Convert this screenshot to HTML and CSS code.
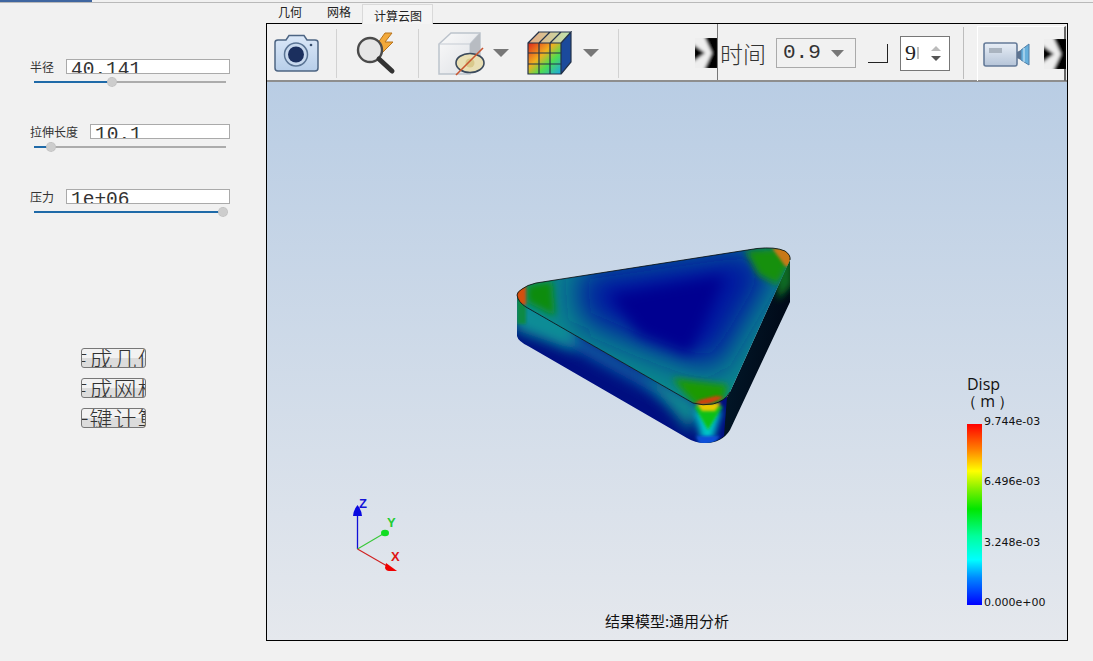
FILE: index.html
```html
<!DOCTYPE html>
<html lang="zh">
<head>
<meta charset="utf-8">
<title>计算云图</title>
<link rel="stylesheet" href="styles.css">
</head>
<body>
<svg width="0" height="0" class="defs">
  <defs>
    <symbol id="chev" viewBox="0 0 22 30">
      <g filter="url(#b1)">
        <path d="M-2 -2H24V32H-2Z" fill="#eee"/>
        <path d="M-2 6L10 15L-2 24Z" fill="#000"/>
        <path d="M9 -2H24V15L17 15Z" fill="#000"/>
        <path d="M9 32H24V15L17 15Z" fill="#000"/>
      </g>
    </symbol>
    <filter id="b1" x="-10%" y="-10%" width="120%" height="120%"><feGaussianBlur stdDeviation="1.4"/></filter>
    <filter id="b20" filterUnits="userSpaceOnUse" x="480" y="200" width="350" height="280"><feGaussianBlur stdDeviation="17"/></filter>
    <filter id="b10" filterUnits="userSpaceOnUse" x="480" y="200" width="350" height="280"><feGaussianBlur stdDeviation="7"/></filter>
    <filter id="b4" filterUnits="userSpaceOnUse" x="480" y="200" width="350" height="280"><feGaussianBlur stdDeviation="3.500"/></filter>
    <filter id="b2" filterUnits="userSpaceOnUse" x="480" y="200" width="350" height="280"><feGaussianBlur stdDeviation="1.400"/></filter>
  </defs>
</svg>
<div class="topline"><div class="topline-active"></div></div>
<div class="app">
  <aside class="side">
    <div class="param">
      <div class="param-head"><span class="param-label">半径</span><div class="field"><span>40.141</span></div></div>
      <div class="slider"><div class="slider-fill" style="width:78px"></div><div class="slider-thumb" style="left:78px"></div></div>
    </div>
    <div class="param">
      <div class="param-head"><span class="param-label">拉伸长度</span><div class="field"><span>10.1</span></div></div>
      <div class="slider"><div class="slider-fill" style="width:17px"></div><div class="slider-thumb" style="left:17px"></div></div>
    </div>
    <div class="param">
      <div class="param-head"><span class="param-label">压力</span><div class="field"><span>1e+06</span></div></div>
      <div class="slider"><div class="slider-fill" style="width:189px"></div><div class="slider-thumb" style="left:189px"></div></div>
    </div>
    <div class="actions">
      <button class="action">生成几何</button>
      <button class="action">生成网格</button>
      <button class="action">一键计算</button>
    </div>
  </aside>
  <main class="main">
    <nav class="tabs">
      <span class="tab">几何</span>
      <span class="tab">网格</span>
      <span class="tab tab-on">计算云图</span>
    </nav>
    <section class="viewer">
      <div class="toolbar">
        <svg class="ic ic-camera" width="47" height="40" viewBox="0 0 47 40">
          <defs><linearGradient id="cam" x1="0" y1="0" x2="0" y2="1"><stop offset="0" stop-color="#dbe8f8"/><stop offset="1" stop-color="#b7cee9"/></linearGradient></defs>
          <path d="M2 9.500Q2 7 5 7H13L16 2.500H31L34 7H42Q45 7 45 9.500V35Q45 38 42 38H5Q2 38 2 35Z" fill="url(#cam)" stroke="#4d6583" stroke-width="1.500"/>
          <circle cx="23" cy="21.500" r="11.500" fill="#c8d9ee" stroke="#5a7494" stroke-width="1.500"/>
          <circle cx="23" cy="21.500" r="8" fill="#1b2f5e"/>
          <circle cx="38" cy="12" r="1.300" fill="#38506f"/>
        </svg>
        <i class="sep sep-a"></i>
        <svg class="ic ic-search" width="47" height="44" viewBox="0 0 47 44">
          <path d="M30 2L20 16H27L23 26L38 11H30L37 2Z" fill="#f2a93a" stroke="#b8741d" stroke-width="1"/>
          <circle cx="15" cy="19" r="12" fill="#e6e6e6" stroke="#4b4b4b" stroke-width="2.400"/>
          <path d="M24 28L37 40" stroke="#333" stroke-width="5" stroke-linecap="round"/>
        </svg>
        <i class="sep sep-b"></i>
        <svg class="ic ic-box" width="48" height="46" viewBox="0 0 48 46">
          <defs><linearGradient id="bx" x1="0" y1="0" x2="1" y2="1"><stop offset="0" stop-color="#fafafa"/><stop offset="1" stop-color="#dcdfe4"/></linearGradient></defs>
          <path d="M2 14L14 3H43V32L33 44H2Z" fill="url(#bx)" stroke="#bcc3cc" stroke-width="1.500"/>
          <path d="M2 14H33V44M33 14L43 3" fill="none" stroke="#c6ccd4" stroke-width="1.200"/>
          <path d="M33 14L43 3V32L33 44Z" fill="#b8bcc2"/>
          <ellipse cx="33" cy="33" rx="14" ry="9.500" fill="#e9dfb4" stroke="#3b4a5c" stroke-width="1.600"/>
          <circle cx="33" cy="33" r="4.500" fill="#d9c98b"/>
          <path d="M19 45L46 18" stroke="#c9552f" stroke-width="1.600"/>
        </svg>
        <svg class="ic ic-caret" width="16" height="8" viewBox="0 0 16 8"><path d="M0 0H16L8 8Z" fill="#777"/></svg>
        <svg class="ic ic-grid" width="45" height="44" viewBox="0 0 45 44">
          <defs>
            <linearGradient id="gf" x1="0" y1="0" x2="1" y2="1"><stop offset="0" stop-color="#e0261c"/><stop offset=".4" stop-color="#f0b020"/><stop offset=".65" stop-color="#50dc50"/><stop offset="1" stop-color="#18a8e8"/></linearGradient>
            <linearGradient id="gt" x1="0" y1="0" x2="1" y2="0"><stop offset="0" stop-color="#e8a880"/><stop offset="1" stop-color="#bfe6ae"/></linearGradient>
          </defs>
          <path d="M1 12L11 1H44L34 12Z" fill="url(#gt)"/>
          <path d="M34 12L44 1V31L34 43Z" fill="#1b4a9c"/>
          <rect x="1" y="12" width="33" height="31" fill="url(#gf)"/>
          <path d="M1 12H34V43H1ZM12 12V43M23 12V43M1 22H34M1 33H34M12 1L1 12M23 1L12 12M34 1L23 12M11 1H44L34 12M34 12L44 1V31L34 43" fill="none" stroke="#23324a" stroke-width="1.200"/>
        </svg>
        <svg class="ic ic-caret2" width="16" height="8" viewBox="0 0 16 8"><path d="M0 0H16L8 8Z" fill="#777"/></svg>
        <i class="sep sep-c"></i>
        <svg class="ic ic-chev" width="22" height="30"><use href="#chev"/></svg>
        <i class="sep sep-d"></i>
        <span class="time-label">时间</span>
        <div class="combo"><span>0.9</span><svg width="13" height="7" viewBox="0 0 13 7"><path d="M0 0H13L6.500 7Z" fill="#777"/></svg></div>
        <div class="corner"></div>
        <div class="spin"><span class="spin-val">9</span><i class="spin-cut"></i><div class="spin-btns"><svg width="10" height="5" viewBox="0 0 10 5"><path d="M5 0L10 5H0Z" fill="#bbb"/></svg><svg width="10" height="5" viewBox="0 0 10 5"><path d="M0 0H10L5 5Z" fill="#555"/></svg></div></div>
        <i class="sep sep-e"></i>
        <div class="video">
          <svg width="47" height="26" viewBox="0 0 47 26">
            <defs><linearGradient id="vd" x1="0" y1="0" x2="0" y2="1"><stop offset="0" stop-color="#e8eef6"/><stop offset="1" stop-color="#b5c4d8"/></linearGradient></defs>
            <rect x="1" y="2" width="33" height="23" rx="2" fill="url(#vd)" stroke="#647a98" stroke-width="1.600"/>
            <rect x="6" y="7" width="13" height="5" fill="#aab4c0"/>
            <path d="M34 11L38 9V19L34 17Z" fill="#5d7390"/>
            <path d="M38 9L46 3V24L38 19Z" fill="#68b0dc" stroke="#4f7fa8"/>
            <path d="M41 7V21" stroke="#d8ecf8"/>
          </svg>
          <svg class="video-chev" width="22" height="30"><use href="#chev"/></svg>
        </div>
      </div>
      <div class="scene">
        <svg class="model" width="290" height="210" viewBox="510 240 290 210">
          <defs>
            <clipPath id="topc"><path d="M517 295Q517 292 522 289Q527 285 536 283L757 248.500Q775 246.500 785 251Q791 255 790 260L730 392Q725 401 713 404Q703 406 693 403L526 307Q518 302 517 295Z"/></clipPath>
            <clipPath id="frontc"><path d="M517 295Q518 302 526 307L693 403Q703 406 713 404Q722 402 727 397L724 436Q716 443 705 443Q695 443 687 438L528 346Q518 341 517 336Z"/></clipPath>
            <clipPath id="rightc"><path d="M727 397L730 392L790 260V302L730 430Q722 443 705 443L713 404Z"/></clipPath>
            <linearGradient id="rightg" x1="0" y1="0" x2="1" y2=".38"><stop offset="0" stop-color="#075a58"/><stop offset=".3" stop-color="#021c2e"/><stop offset="1" stop-color="#000614"/></linearGradient>
          </defs>
          <g clip-path="url(#rightc)">
            <rect x="700" y="250" width="95" height="195" fill="url(#rightg)"/>
            <path d="M775 265L792 255V285L778 300Z" fill="#0a6a20" filter="url(#b4)"/>
          </g>
          <g clip-path="url(#frontc)">
            <path d="M510 280H740V450H510Z" fill="#000e80"/>
            <path d="M510 296L700 405V418L510 314Z" fill="#0a62a4" filter="url(#b10)"/>
            <path d="M515 290L575 322V350L515 330Z" fill="#0b8d96" filter="url(#b10)"/>
            <path d="M517 297H526V324H517Z" fill="#0f8a44" filter="url(#b2)"/>
            <path d="M640 370L700 405L690 432Z" fill="#0b8a90" filter="url(#b10)"/>
            <path d="M694 410H722L712 442H702Z" fill="#00c8c8" filter="url(#b4)"/>
            <path d="M694 406H723L708 430Z" fill="#10c014" filter="url(#b2)"/>
            <path d="M696 403H721L715 411H702Z" fill="#e8c800" filter="url(#b2)"/>
            <path d="M696 436H720L712 445H700Z" fill="#0c50d8" filter="url(#b2)"/>
          </g>
          <g clip-path="url(#topc)">
            <rect x="510" y="240" width="290" height="210" fill="#0a8a8c"/>
            <path d="M575 270L750 245L775 270L715 372L650 350L580 320Z" fill="#0018a0" filter="url(#b20)"/>
            <path d="M610 295L725 275L690 355L640 335Z" fill="#000090" filter="url(#b10)"/>
            <path d="M527 285L552 281L555 316L527 302Z" fill="#108c08" filter="url(#b4)"/>
            <path d="M745 250L785 248L790 262L778 285L758 275Z" fill="#149010" filter="url(#b4)"/>
            <path d="M672 378L728 385L722 403L695 405Z" fill="#1c9a06" filter="url(#b4)"/>
            <path d="M515 285H526V305H515Z" fill="#d45008" filter="url(#b2)"/>
            <path d="M772 248L792 248V268L785 266Z" fill="#c87818" filter="url(#b2)"/>
            <path d="M694 404Q708 407 724 397L716 396L700 400Z" fill="#d83c08" filter="url(#b2)"/>
          </g>
          <path d="M517 295Q517 292 522 289Q527 285 536 283L757 248.500Q775 246.500 785 251Q791 255 790 260M526 307L693 403Q703 406 713 404Q725 401 730 392M517 295Q518 302 526 307" fill="none" stroke="#0b0b0b" stroke-width=".8"/>
        </svg>

        <svg class="axes" width="60" height="90" viewBox="0 0 60 90">
          <path d="M12.500 6Q17 12 17 17H8Q8 12 12.500 6Z" fill="#0a0ae0"/>
          <path d="M12.500 17V50" stroke="#1010d8" stroke-width="1.300"/>
          <path d="M12.500 50L38 35" stroke="#38c838" stroke-width="1.100"/>
          <path d="M12.500 50L42 67" stroke="#d02020" stroke-width="1.100"/>
          <ellipse cx="40" cy="34" rx="4" ry="3.300" fill="#11dd22"/>
          <path d="M41 64L52 72H44Q41 72 40 69Z" fill="#f00000"/>
        </svg>
        <span class="axis-name axis-z">Z</span>
        <span class="axis-name axis-y">Y</span>
        <span class="axis-name axis-x">X</span>

        <div class="legend">
          <div class="legend-title">Disp<span class="legend-unit">（ m ）</span></div>
          <div class="legend-body">
            <div class="legend-bar"></div>
            <div class="legend-ticks"><span>9.744e-03</span><span>6.496e-03</span><span>3.248e-03</span><span>0.000e+00</span></div>
          </div>
        </div>
        <div class="caption">结果模型:通用分析</div>
      </div>
    </section>
  </main>
</div>
</body>
</html>
```
FILE: styles.css
```css
* { box-sizing: border-box; }
html, body { margin: 0; padding: 0; }
body {
  width: 1093px;
  height: 661px;
  overflow: hidden;
  background: #f1f1f1;
  font-family: "Noto Sans CJK SC", "Liberation Sans", sans-serif;
  color: #222;
}
.defs { position: absolute; }
.topline { height: 3px; border-bottom: 1px solid #b9b9b9; }
.topline-active { width: 92px; height: 2px; background: #3f66a0; }
.app { display: flex; height: 658px; }

.side { width: 266px; padding: 56px 0 0 30px; flex: none; }
.param { height: 65px; width: 200px; }
.param-head { display: flex; align-items: center; height: 15px; }
.param-label { font-size: 12px; line-height: 15px; white-space: nowrap; margin-right: 12px; color: #333; }
.field {
  flex: 1;
  height: 15px;
  background: #fff;
  border: 1px solid #aaa;
  overflow: hidden;
  padding-left: 4px;
  font: 19.500px/20px "Liberation Mono", monospace;
  color: #333;
}
.field span { display: block; }
.slider { position: relative; width: 192px; height: 2px; margin: 7px 0 0 4px; background: #acacac; }
.slider-fill { height: 2px; background: #1f6aa8; }
.slider-thumb {
  position: absolute;
  top: -4px;
  width: 10px;
  height: 10px;
  margin-left: -5px;
  border-radius: 50%;
  background: #cdcdcd;
  border: 1px dotted #bdbdbd;
}
.actions { display: flex; flex-direction: column; gap: 10px; margin: 94px 0 0 51px; }
.action {
  width: 65px;
  height: 20px;
  padding: 0;
  border: 1px solid #777;
  border-radius: 3px;
  background: linear-gradient(#f2f2f2 0 50%, #dcdcdc 50%);
  overflow: hidden;
  display: flex;
  justify-content: center;
  font: 300 23px/18px "Noto Sans CJK SC", sans-serif;
  letter-spacing: 1px;
  color: #333;
  white-space: nowrap;
}

.main { width: 802px; flex: none; display: flex; flex-direction: column; }
.tabs { display: flex; height: 20px; padding-left: 12px; font-size: 12px; line-height: 22px; align-items: flex-end; }
.tab { margin-right: 25px; color: #222; }
.tab-on {
  margin: 0 0 -1px -14px;
  padding: 0 11px;
  height: 20px;
  width: 71px;
  text-align: center;
  white-space: nowrap;
  background: #f4f4f4;
  border: 1px solid #d9d9d9;
  border-bottom: 0;
  line-height: 21px;
  position: relative;
  z-index: 1;
}
.viewer { height: 618px; width: 802px; border: 1px solid #000; display: flex; flex-direction: column; }

.toolbar { height: 58px; flex: none; display: flex; align-items: center; padding-top: 2px; border-bottom: 2px solid #8e8e8e; background: #f1f1f1; }
.ic { flex: none; }
.ic-camera { margin-left: 6px; }
.sep { display: block; flex: none; width: 1px; height: 49px; background: #d2d2d2; }
.sep-a { margin-left: 16px; }
.ic-search { margin-left: 18px; }
.sep-b { margin-left: 16px; }
.ic-box { margin-left: 18px; }
.ic-caret { margin-left: 8px; }
.ic-grid { margin-left: 18px; }
.ic-caret2 { margin-left: 11px; }
.sep-c { margin-left: 19px; }
.ic-chev { margin-left: 76px; }
.sep-d { align-self: stretch; height: auto; margin-top: -2px; background: #777; }
.time-label { margin-left: 2px; font-size: 23px; font-weight: 300; line-height: 28px; color: #333; white-space: nowrap; }
.combo {
  margin-left: 10px;
  width: 80px;
  height: 30px;
  border: 1px solid #aaa;
  display: flex;
  align-items: center;
  justify-content: space-between;
  padding: 0 11px 0 6px;
  font: 21px/28px "Liberation Mono", monospace;
  color: #333;
}
.corner { margin-left: 12px; width: 20px; height: 19px; border: solid #222; border-width: 0 1.500px 1.500px 0; }
.spin {
  margin-left: 12px;
  width: 50px;
  height: 35px;
  border: 1px solid #777;
  background: #fff;
  display: flex;
  align-items: center;
  padding-left: 4px;
  font: 22px/30px "Liberation Serif", serif;
  color: #222;
}
.spin-cut { width: 2px; height: 12px; background: #bbb; margin-left: 1px; }
.spin-btns { display: flex; flex-direction: column; gap: 5px; margin-left: 12px; }
.spin-btns svg { display: block; }
.sep-e { margin-left: 13px; height: 52px; background: #bdbdbd; }
.video { margin-left: 13px; width: 89px; height: 55px; display: flex; align-items: center; padding-left: 5px; border-top: 1px solid #fff; border-left: 1px solid #fff; border-right: 2px solid #666; }
.video svg { flex: none; }
.video-chev { margin-left: 14px; }

.scene { flex: 1; position: relative; background: linear-gradient(#b9cde4, #e5e8ed); overflow: hidden; }
.model { position: absolute; left: 243px; top: 158px; }
.axes { position: absolute; left: 78px; top: 417px; }
.axis-name { position: absolute; font: bold 13px/12px "Liberation Sans", sans-serif; }
.axis-z { left: 92px; top: 416px; color: #1414d8; }
.axis-y { left: 120px; top: 435px; color: #22cc33; }
.axis-x { left: 124px; top: 469px; color: #e01414; }

.legend { position: absolute; left: 700px; top: 294px; }
.legend-title { font: 16px/17px "Open Sans", sans-serif; color: #111; white-space: nowrap; margin-bottom: 14px; }
.legend-unit { display: block; margin-left: -6px; letter-spacing: -.5px; }
.legend-body { display: flex; }
.legend-bar {
  width: 15px;
  height: 181px;
  background: linear-gradient(#ff0000 0%, #ff8000 14%, #ffff00 26%, #80f000 36%, #00e600 47%, #00ff9c 62%, #00ffff 75%, #0088ff 85%, #0000ff 100%);
}
.legend-ticks {
  height: 195px;
  margin: -9px 0 0 2px;
  display: flex;
  flex-direction: column;
  justify-content: space-between;
  font: 11px/14px "DejaVu Sans", sans-serif;
  color: #111;
}
.caption { position: absolute; left: 0; right: 0; bottom: 10px; text-align: center; font-size: 15px; line-height: 18px; color: #111; }
```
